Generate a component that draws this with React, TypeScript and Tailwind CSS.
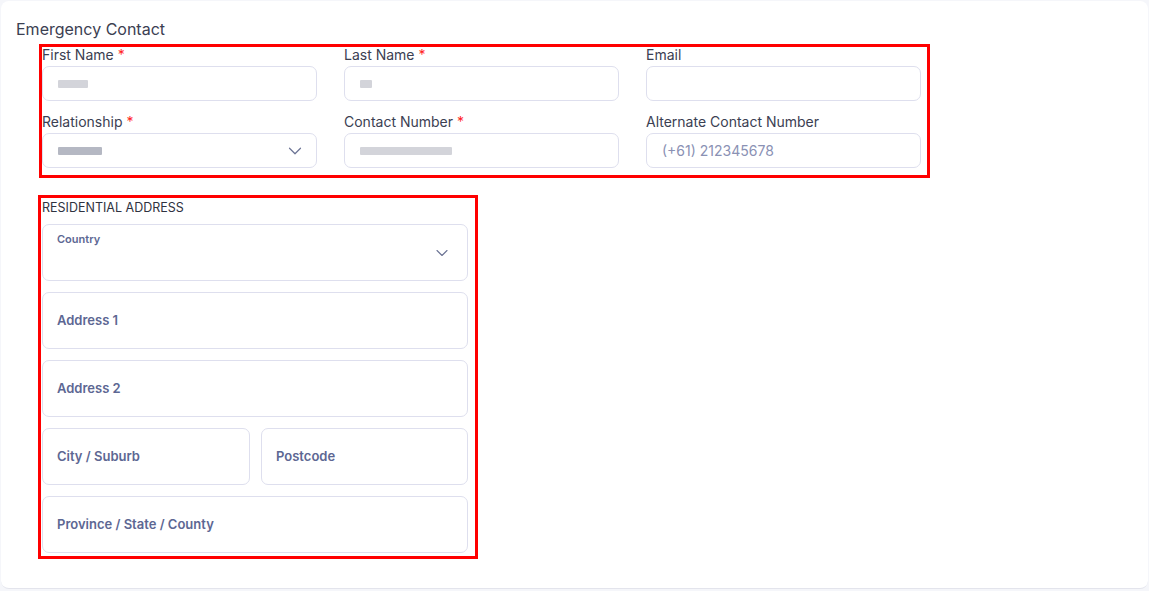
import { ChevronDown } from "lucide-react";

type FieldProps = {
  label: string;
  required?: boolean;
  children?: React.ReactNode;
};

function Field({ label, required, children }: FieldProps) {
  return (
    <div className="flex flex-col">
      <label className="h-[19px] text-[14px] leading-[16px] text-[#3b4052]">
        {label}
        {required && <span className="ml-1 text-[#ff1f1f]">*</span>}
      </label>
      <div className="relative flex h-[35px] items-center rounded-[7px] border border-[#dedfee] bg-white px-[15px]">
        {children}
      </div>
    </div>
  );
}

// redacted value, shown as a soft grey smear
function Smudge({ w, dark }: { w: number; dark?: boolean }) {
  return (
    <span
      className={`h-[8px] rounded-[1px] blur-[0.6px] ${dark ? "bg-[#b5b8c3]" : "bg-[#d3d4da]"}`}
      style={{ width: w }}
    />
  );
}

function AddressBox({ label, className = "" }: { label: string; className?: string }) {
  return (
    <div
      className={`flex h-[57px] items-center rounded-[7px] border border-[#dedfee] bg-white px-[14px] text-[13px] font-semibold text-[#5d6793] ${className}`}
    >
      {label}
    </div>
  );
}

export default function App() {
  return (
    <div className="min-h-screen bg-[#f5f6fa] p-px font-['Inter',sans-serif]">
      <div className="h-[588px] w-[1147px] rounded-[8px] border-b border-[#e3e4ec] bg-white pl-[15px] pt-[18px]">
        <h2 className="text-[16px] leading-[20px] text-[#3b4052]">Emergency Contact</h2>

        <div className="ml-[23px] mt-[5px] w-[891px] border-[3px] border-[#ff0000] pb-[7px]">
          <div className="grid grid-cols-[275px_275px_275px] gap-x-[27px] gap-y-[13px]">
            <Field label="First Name" required>
              <Smudge w={30} />
            </Field>
            <Field label="Last Name" required>
              <Smudge w={12} />
            </Field>
            <Field label="Email" />
            <Field label="Relationship" required>
              <Smudge w={44} dark />
              <ChevronDown
                className="absolute right-[10px] size-[22px] text-[#6b7394]"
                strokeWidth={1.3}
              />
            </Field>
            <Field label="Contact Number" required>
              <Smudge w={92} />
            </Field>
            <Field label="Alternate Contact Number">
              <span className="text-[14px] text-[#8a91b4]">(+61) 212345678</span>
            </Field>
          </div>
        </div>

        <div className="ml-[22px] mt-[17px] w-[440px] border-[3px] border-[#ff0000] pb-[3px] pl-px pr-[7px]">
          <div className="h-[26px] pt-[2px] text-[12.5px] leading-[16px] text-[#2f3240]">
            RESIDENTIAL ADDRESS
          </div>
          <div className="flex flex-col gap-[11px]">
            <div className="relative h-[57px] rounded-[7px] border border-[#dedfee] bg-white px-[14px] pt-[7px]">
              <div className="text-[11px] leading-[14px] font-semibold text-[#5d6793]">Country</div>
              <ChevronDown
                className="absolute right-[15px] top-[18px] size-[20px] text-[#6b7394]"
                strokeWidth={1.3}
              />
            </div>
            <AddressBox label="Address 1" />
            <AddressBox label="Address 2" />
            <div className="flex gap-[11px]">
              <AddressBox label="City / Suburb" className="w-[208px]" />
              <AddressBox label="Postcode" className="flex-1" />
            </div>
            <AddressBox label="Province / State / County" />
          </div>
        </div>
      </div>
    </div>
  );
}
